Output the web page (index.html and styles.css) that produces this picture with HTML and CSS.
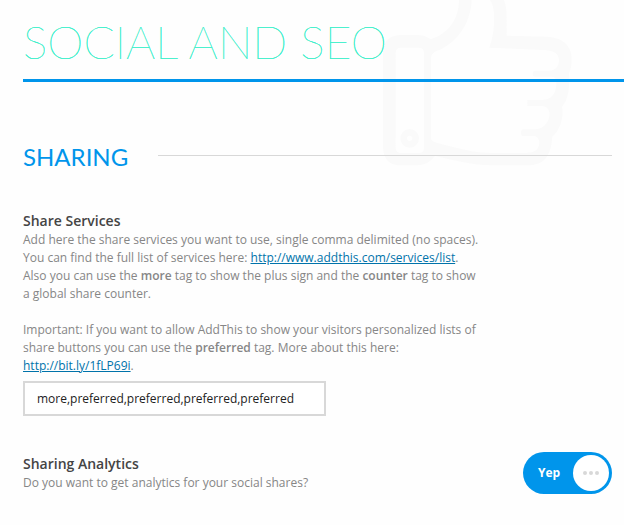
FILE: index.html
```html
<!DOCTYPE html>
<html lang="en">
<head>
<meta charset="utf-8">
<title>Social and SEO</title>
<link rel="stylesheet" href="styles.css">
</head>
<body>
<main class="panel">
  <svg class="thumb" viewBox="0 0 762 540" aria-hidden="true">
    <path fill-rule="evenodd" d="M39 160Q39 105 95 105H140Q165 105 182 118C235 100 266 60 267 0H305C302 80 250 135 200 153Q183 160 183 175V415Q183 424 200 428C260 443 310 459 370 459H460C500 459 508 445 508 425Q505 408 490 408H460Q453 408 453 398T460 388H495C525 388 539 360 539 340Q535 318 515 318H472V300H515C550 300 559 275 559 247Q559 230 545 230H496Q488 230 488 221T496 212H535C560 212 567 195 567 180C567 160 550 151 520 150L358 143C370 110 374 75 372 40Q370 15 360 0H402Q410 20 410 50V107L530 110C585 112 605 145 605 175Q605 205 597 220C600 260 595 300 576 320C582 355 570 390 547 410C543 465 525 496 470 496H365C310 496 250 480 195 468Q175 496 140 496H95Q39 496 39 440ZM93 143Q77 143 77 159V443Q77 459 93 459H146Q162 459 162 443V159Q162 143 146 143Z"/>
    <circle class="thumb-button" cx="119" cy="415" r="18"/>
  </svg>
  <h1 class="title">SOCIAL AND SEO</h1>
  <h2 class="section">SHARING</h2>
  <section class="option">
    <label class="option-name" for="services">Share Services</label>
    <p class="text">Add here the share services you want to use, single comma delimited (no spaces). You can find the full list of services here: <a href="http://www.addthis.com/services/list">http://www.addthis.com/services/list</a>. Also you can use the <b>more</b> tag to show the plus sign and the <b>counter</b> tag to show a global share counter.</p>
    <p class="text">Important: If you want to allow AddThis to show your visitors personalized lists of share buttons you can use the <b>preferred</b> tag. More about this here: <a href="http://bit.ly/1fLP69i">http://bit.ly/1fLP69i</a>.</p>
    <input class="field" id="services" type="text" value="more,preferred,preferred,preferred,preferred">
  </section>
  <section class="option option-row">
    <div>
      <h3 class="option-name" id="analytics">Sharing Analytics</h3>
      <p class="text">Do you want to get analytics for your social shares?</p>
    </div>
    <button class="toggle" type="button" role="switch" aria-checked="true" aria-labelledby="analytics">
      <span>Yep</span>
      <span class="knob"><i></i><i></i><i></i></span>
    </button>
  </section>
</main>
</body>
</html>
```
FILE: styles.css
```css
* { box-sizing: border-box; }
body {
  margin: 0;
  background: #fefefe;
  color: #868686;
  font-family: "Open Sans", sans-serif;
  font-size: 12px;
  line-height: 18px;
}
.panel {
  position: relative;
  padding: 12px 12px 28px 23px;
}
.thumb {
  position: absolute;
  z-index: -1;
  top: 0;
  right: 0;
  width: 254px;
  height: 180px;
  fill: #fafafa;
}
.thumb-button {
  fill: none;
  stroke: #fafafa;
  stroke-width: 20;
}
.title {
  margin: 0 -12px 0 0;
  padding-bottom: 7px;
  border-bottom: 3px solid #0095eb;
  color: #3df0cb;
  font-family: Lato, sans-serif;
  font-size: 46px;
  font-weight: 100;
  line-height: 60px;
  text-shadow: 0 0 0 #3df0cb, 0 0 0 #3df0cb;
  white-space: nowrap;
}
.section {
  display: flex;
  align-items: center;
  gap: 30px;
  margin: 60px 0 39px;
  color: #0095eb;
  font-family: Lato, sans-serif;
  font-size: 24px;
  font-weight: 400;
  line-height: 30px;
}
.section::after {
  content: "";
  flex: 1;
  height: 1px;
  margin-bottom: 4px;
  background: #d8d8d8;
}
.option-name {
  display: block;
  margin: 0;
  color: #444;
  font-size: 14px;
  font-weight: 600;
  line-height: 20px;
}
.text {
  max-width: 461px;
  margin: 0;
}
.text + .text { margin-top: 18px; }
.text b { font-weight: 600; }
.text a { color: #0073aa; }
.field {
  display: block;
  width: 303px;
  max-width: 100%;
  height: 35px;
  margin-top: 6px;
  padding: 0 12px;
  border: 2px solid #d8d8d8;
  background: #fff;
  color: #222;
  font: inherit;
}
.option-row {
  display: flex;
  align-items: center;
  justify-content: space-between;
  margin-top: 36px;
}
.toggle {
  display: flex;
  align-items: center;
  justify-content: space-between;
  width: 89px;
  height: 42px;
  padding: 0 3px 0 15px;
  border: 0;
  border-radius: 21px;
  background: #0095eb;
  color: #fff;
  font: 700 12px/18px "Open Sans", sans-serif;
}
.knob {
  display: flex;
  align-items: center;
  justify-content: center;
  gap: 2px;
  width: 36px;
  height: 36px;
  border-radius: 50%;
  background: #fff;
}
.knob i {
  width: 4px;
  height: 4px;
  border-radius: 50%;
  background: #d8d8d8;
}
```
